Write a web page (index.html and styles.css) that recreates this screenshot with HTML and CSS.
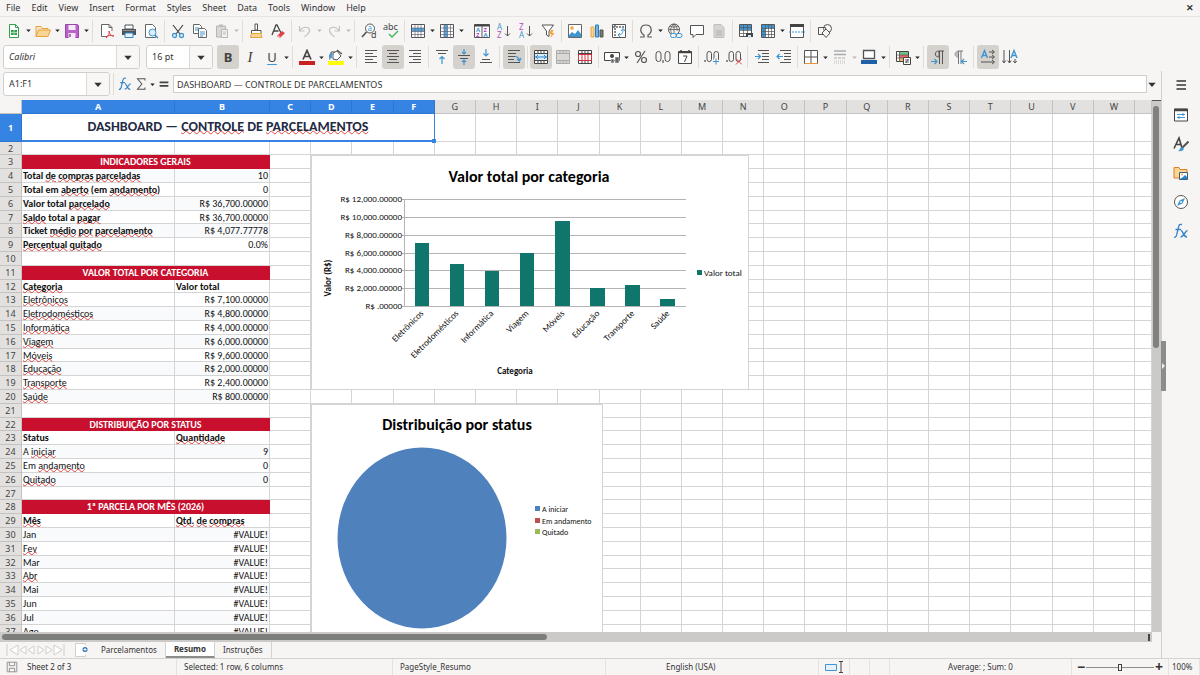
FILE: index.html
```html
<!DOCTYPE html>
<html lang="pt-BR">
<head>
<meta charset="utf-8">
<title>Controle de parcelamentos</title>
<link rel="stylesheet" href="styles.css">
</head>
<body>
<svg class="defs" aria-hidden="true">
<defs>
<symbol id="new" viewBox="0 0 16 16"><path d="M3.5 1.500h6l3 3v10h-9z" fill="#fff" stroke="#35a04b"/><path d="M9.500 1.500v3h3" fill="none" stroke="#35a04b"/><path d="M5 7h6v5H5z" fill="#35a04b"/><path d="M5 9.500h6M8 7v5" stroke="#a5dbb0"/></symbol>
<symbol id="open" viewBox="0 0 16 16"><path d="M1 13.500V3.500h5l1 2h6v2" fill="#fbe5c4" stroke="#e8a33d"/><path d="M1 13.500 3.500 7H15.500L13 13.500z" fill="#fbd596" stroke="#e8a33d"/></symbol>
<symbol id="save" viewBox="0 0 16 16"><path d="M1.500 1.500h12l1 1v12h-13z" fill="#b865c6" stroke="#9b45ad"/><path d="M4.500 2h7v5h-7zM4.500 10h7v5h-7z" fill="#f6eaf8"/><path d="M6 11v3" stroke="#9b45ad" stroke-width="1.500"/></symbol>
<symbol id="pdf" viewBox="0 0 16 16"><path d="M13 8V4.500l-3-3H2.500v12H8" fill="#fff" stroke="#666"/><path d="M10 1.500v3h3" fill="none" stroke="#666"/><path d="M7 15c3-2 3.500-4 3-7M10 8c1 4 2 5 5 5M7 14c2-2 5-2 8-1" fill="none" stroke="#d9414e"/></symbol>
<symbol id="print" viewBox="0 0 16 16"><path d="M4 2h8v4H4z" fill="#fff" stroke="#4d5359"/><path d="M1 6h14v6H1z" fill="#4d5359"/><path d="M4 10h8v4.500H4z" fill="#e8f3fb" stroke="#3784c5"/><path d="M2 7.500h12" stroke="#8b9095"/></symbol>
<symbol id="preview" viewBox="0 0 16 16"><path d="M2.500 1.500h7l3 3v10h-10z" fill="#fff" stroke="#666"/><circle cx="9.500" cy="9.500" r="3.500" fill="#dceffb" stroke="#3e95d0"/><path d="m12 12 3 3" stroke="#3e95d0" stroke-width="1.500"/></symbol>
<symbol id="cut" viewBox="0 0 16 16"><path d="m3 2 7 9M13 2 6 11" stroke="#444" stroke-width="1.200"/><circle cx="4.500" cy="12.500" r="2" fill="none" stroke="#3e95d0" stroke-width="1.300"/><circle cx="11.500" cy="12.500" r="2" fill="none" stroke="#3e95d0" stroke-width="1.300"/></symbol>
<symbol id="copy" viewBox="0 0 16 16"><path d="M1.500 1.500h6l2 2v7h-8z" fill="#fff" stroke="#666"/><path d="M3 5h4M3 7h4" stroke="#3e95d0"/><path d="M6.500 5.500h6l2 2v7h-8z" fill="#fff" stroke="#666"/><path d="M8 9h5M8 11h5M8 13h3" stroke="#3e95d0"/></symbol>
<symbol id="paste" viewBox="0 0 16 16"><path d="M2.500 3h9v11h-9z" fill="#d9d8d6" stroke="#b7b6b4"/><path d="M5 1.500h4V4H5z" fill="#bbb"/><path d="M7.500 6.500h6v8h-6z" fill="#f4f4f3" stroke="#b7b6b4"/><path d="M9 9h3M9 11h3" stroke="#b7b6b4"/></symbol>
<symbol id="brush" viewBox="0 0 16 16"><path d="M7 1h2.500v6H7z" fill="#fff" stroke="#555"/><path d="M3.500 7.500h9.500v3H3.500z" fill="#fff" stroke="#555"/><path d="M3.500 10.500 2.500 14.500h11.500l-1-4z" fill="#fbd596" stroke="#e8a33d"/></symbol>
<symbol id="clear" viewBox="0 0 16 16"><path d="m2 12 4-10h1l4 8M3.500 8h5" fill="none" stroke="#444" stroke-width="1.300"/><path d="m7 13 5-5 3 2-5 5z" fill="#e3404a"/><path d="m7 13 3 2 1-1-3-2z" fill="#f2a2a7"/></symbol>
<symbol id="undo" viewBox="0 0 16 16"><path d="M2.500 3v5h5M3 7.500C6 3 12 3.500 12.500 7c.4 3-3 5-5 7" fill="none" stroke="#c4c3c1" stroke-width="1.200"/></symbol>
<symbol id="redo" viewBox="0 0 16 16"><path d="M13.500 3v5h-5M13 7.500C10 3 4 3.500 3.500 7c-.4 3 3 5 5 7" fill="none" stroke="#c4c3c1" stroke-width="1.200"/></symbol>
<symbol id="find" viewBox="0 0 16 16"><circle cx="9" cy="5.500" r="4.500" fill="#fff" stroke="#555"/><path d="M5.500 9 1 14" stroke="#555" stroke-width="1.700"/><text x="6.500" y="8" class="g-blue g8">a</text><text x="10" y="15" class="g-dark g9">d</text></symbol>
<symbol id="spell" viewBox="0 0 16 16"><text x="0" y="7" class="g-dark g9">abc</text><path d="m6 11 3 3 6-6" fill="none" stroke="#3fb55c" stroke-width="1.400"/></symbol>
<symbol id="rows" viewBox="0 0 16 16"><path d="M1.500 1.500h13v13h-13z" fill="#fff" stroke="#555"/><path d="M2 5h12v3.500H2z" fill="#53a7e0"/><path d="M1.500 5h13M1.500 8.500h13M1.500 11.500h13M5 1.500v13M8 1.500v13M11 1.500v13" stroke="#667" stroke-width=".7"/></symbol>
<symbol id="cols" viewBox="0 0 16 16"><path d="M1.500 1.500h13v13h-13z" fill="#fff" stroke="#555"/><path d="M5 2h3.500v12H5z" fill="#53a7e0"/><path d="M1.500 5h13M1.500 8.500h13M1.500 11.500h13M5 1.500v13M8.500 1.500v13M11.500 1.500v13" stroke="#667" stroke-width=".7"/></symbol>
<symbol id="sort" viewBox="0 0 16 16"><path d="M.5 1.500h15v13H.5z" fill="#fff" stroke="#555"/><path d="M.5 2.500h15" stroke="#444" stroke-width="2"/><path d="M8 3v11" stroke="#555"/><text x="2" y="9" class="g-blue g6">A</text><text x="2" y="14" class="g-pur g6">Z</text><text x="9.500" y="9" class="g-pur g6">Z</text><text x="9.500" y="14" class="g-blue g6">A</text></symbol>
<symbol id="az" viewBox="0 0 16 16"><text x="1" y="7" class="g-blue g8">A</text><text x="1" y="15" class="g-pur g8">Z</text><path d="M11.500 3v10m-2.500-2.500 2.500 2.500L14 10.500" fill="none" stroke="#555"/></symbol>
<symbol id="za" viewBox="0 0 16 16"><text x="1" y="7" class="g-pur g8">Z</text><text x="1" y="15" class="g-blue g8">A</text><path d="M11.500 3v10m-2.500-2.500 2.500 2.500L14 10.500" fill="none" stroke="#555"/></symbol>
<symbol id="filter" viewBox="0 0 16 16"><path d="M2 2h11.500L9 8v5.500L6.500 12V8z" fill="#fff" stroke="#555"/><path d="m11 7-2 4h2.500l-1 4 4-5H12l1.500-3z" fill="#f3a23b"/></symbol>
<symbol id="image" viewBox="0 0 16 16"><path d="M1.500 1.500h13v13h-13z" fill="#fff" stroke="#666"/><circle cx="5" cy="5" r="1.700" fill="#f3a23b"/><path d="m2 14 0-2 3-3 3 2 3-4 3 4v3z" fill="#3e95d0"/></symbol>
<symbol id="chart" viewBox="0 0 16 16"><path d="M2 4h3v10H2z" fill="#fbd596" stroke="#e8a33d"/><path d="M6.500 2h3v12h-3z" fill="#70b3e4" stroke="#2b7fc0"/><path d="M11 7h3v7h-3z" fill="#777" stroke="#555"/></symbol>
<symbol id="pivot" viewBox="0 0 16 16"><path d="M1.500 1.500h13v13h-13z" fill="#fff" stroke="#555"/><path d="M2 4h12M4 2v12" stroke="#666" stroke-width="1.500" stroke-dasharray="2 1"/><path d="M7 12c4 0 5-2 5-6m-2 2 2-2.500L14 8M9 10l-2 2 2 2" fill="none" stroke="#3e95d0"/></symbol>
<symbol id="omega" viewBox="0 0 16 16"><path d="M2 14h4v-2C1 9 2 2 8 2s7 7 2 10v2h4" fill="none" stroke="#555" stroke-width="1.200"/></symbol>
<symbol id="link" viewBox="0 0 16 16"><circle cx="7" cy="6.500" r="5.500" fill="none" stroke="#555"/><path d="M1.500 6.500h11M7 1v11M3 3c2 1.500 6 1.500 8 0M7 1c-4 3-4 7-2 10M7 1c4 3 3 6 3 7" fill="none" stroke="#555" stroke-width=".8"/><rect x="3.500" y="10.500" width="6" height="4" rx="2" fill="#f6f5f4" stroke="#3e95d0"/><rect x="9" y="10.500" width="6" height="4" rx="2" fill="none" stroke="#3e95d0"/></symbol>
<symbol id="comment" viewBox="0 0 16 16"><path d="M1.500 2.500h13v9H7l-3 3v-3H1.500z" fill="#fff" stroke="#555"/></symbol>
<symbol id="header" viewBox="0 0 16 16"><path d="M3 1.500h7l3 3v10H3z" fill="#d5d4d2" stroke="#c0bfbd"/><path d="M5 8h6M5 10h6M5 12h6" stroke="#b2b1af"/></symbol>
<symbol id="area" viewBox="0 0 16 16"><path d="M1.500 1.500h12v12h-12z" fill="#fff" stroke="#555"/><path d="M2 2h11v5H2z" fill="#3e95d0"/><path d="M1.500 4.500h12M1.500 7.500h12M1.500 10.500h12M5.500 1.500v12M9.500 1.500v12" stroke="#555" stroke-width=".7"/><path d="M8 10h7v4H8z" fill="#444"/><path d="M10 12h3v3h-3z" fill="#cbe5f7"/></symbol>
<symbol id="freeze" viewBox="0 0 16 16"><path d="M1.500 1.500h13v13h-13z" fill="#fff" stroke="#555"/><path d="M2 2h12v3.500H2zM2 2h3.500v12H2z" fill="#3e95d0"/><path d="M1.500 5.500h13M1.500 8.500h13M1.500 11.500h13M5.500 1.500v13M8.500 1.500v13M11.500 1.500v13" stroke="#555" stroke-width=".7"/></symbol>
<symbol id="split" viewBox="0 0 16 16"><path d="M1.500 1.500h13v13h-13z" fill="#fff" stroke="#555"/><path d="M1 2.500h14" stroke="#444" stroke-width="3"/><path d="M0 9h16" stroke="#3e95d0" stroke-dasharray="2 1"/></symbol>
<symbol id="shapes" viewBox="0 0 16 16"><path d="M1.500 4.500h7v7h-7z" fill="none" stroke="#555"/><circle cx="10.500" cy="5.500" r="4" fill="none" stroke="#555"/><path d="m9 6 4 4-4 4.500-4-4.500z" fill="#f6f5f4" stroke="#555"/></symbol>
<symbol id="fcolor" viewBox="0 0 16 16"><path d="M4 10.500 8 1.500l4 9M5.500 7.500h5" fill="none" stroke="#444" stroke-width="1.700"/><path d="M0 12h16v4H0z" fill="#c9211e"/></symbol>
<symbol id="bcolor" viewBox="0 0 16 16"><path d="M3 9V3h4M5 4l4-2 4 5-4 4-4-1z" fill="#fff" stroke="#555"/><path d="M3 4C.5 5 1 8 1.500 11 4 9 3 6 5 5z" fill="#3e95d0"/><path d="m9 1 5 4" stroke="#555" stroke-width="1.300"/><path d="M0 12h16v4H0z" fill="#ff0"/></symbol>
<symbol id="left" viewBox="0 0 16 16"><path d="M2 1.500h12M2 4.500h8M2 7.500h12M2 10.500h8M2 13.500h12" stroke="#555"/></symbol>
<symbol id="center" viewBox="0 0 16 16"><path d="M2 1.500h12M4 4.500h8M2 7.500h12M4 10.500h8M2 13.500h12" stroke="#555"/></symbol>
<symbol id="right" viewBox="0 0 16 16"><path d="M2 1.500h12M6 4.500h8M2 7.500h12M6 10.500h8M2 13.500h12" stroke="#555"/></symbol>
<symbol id="top" viewBox="0 0 16 16"><path d="M2 1.500h12M4 4.500h8" stroke="#555"/><path d="M8 15V7.500M5.500 10 8 7.500l2.500 2.500" fill="none" stroke="#3e95d0" stroke-width="1.200"/></symbol>
<symbol id="middle" viewBox="0 0 16 16"><path d="M2 6.500h12M4 9.500h8" stroke="#555"/><path d="M8 0v5M6 3l2 2 2-2M8 16v-5M6 13l2-2 2 2" fill="none" stroke="#3e95d0" stroke-width="1.200"/></symbol>
<symbol id="bottom" viewBox="0 0 16 16"><path d="M4 10.500h8M2 13.500h12" stroke="#555"/><path d="M8 0v7M5.500 4.500 8 7l2.500-2.500" fill="none" stroke="#3e95d0" stroke-width="1.200"/></symbol>
<symbol id="wrap" viewBox="0 0 16 16"><path d="M2 1.500h12M2 4.500h8M2 7.500h7M2 10.500h6M2 13.500h12" stroke="#555"/><path d="M9 7.500c3 0 4 1 4.500 4M11 10l2.500 2L15 9" fill="none" stroke="#3e95d0" stroke-width="1.200"/></symbol>
<symbol id="merge" viewBox="0 0 16 16"><path d="M1.500 1.500h13v13h-13z" fill="#fff" stroke="#444"/><path d="M1.500 4.500h13M1.500 11.500h13M5 1.500v3M8 1.500v3M11 1.500v3M5 11.500v3M8 11.500v3M11 11.500v3" stroke="#444"/><path d="M2 5h12v6H2z" fill="#d6ecfa"/><path d="M2 8h12M5 6 3 8l2 2M11 6l2 2-2 2" fill="none" stroke="#2b84c6"/></symbol>
<symbol id="mergec" viewBox="0 0 16 16"><path d="M1.500 1.500h13v13h-13z" fill="#d9d8d6" stroke="#aaa"/><path d="M1.500 4.500h13M1.500 11.500h13M5 1.500v3M8 1.500v3M11 1.500v3M5 11.500v3M8 11.500v3M11 11.500v3" stroke="#aaa"/></symbol>
<symbol id="unmerge" viewBox="0 0 16 16"><path d="M1.500 1.500h13v13h-13z" fill="#fff" stroke="#444"/><path d="M1.500 4.500h13M5 1.500v3M8 1.500v3M11 1.500v3M5 11.500v3M8 11.500v3M11 11.500v3" stroke="#444"/><path d="M1.500 5.500h13v6h-13zM5 5.500v6M8 5.500v6M11 5.500v6" fill="none" stroke="#d9333f"/></symbol>
<symbol id="currency" viewBox="0 0 16 16"><path d="M.5 3.500h15v8H.5z" fill="#fff" stroke="#444"/><circle cx="8" cy="7" r="2" fill="#444"/><path d="M7 10h3v4H7zM11 8h4v6h-4z" fill="#666" stroke="#f6f5f4" stroke-width=".5"/></symbol>
<symbol id="percent" viewBox="0 0 16 16"><circle cx="5" cy="5" r="2.500" fill="none" stroke="#555" stroke-width="1.200"/><circle cx="11" cy="11" r="2.500" fill="none" stroke="#555" stroke-width="1.200"/><path d="M12 2 4 14" stroke="#555" stroke-width="1.200"/></symbol>
<symbol id="number" viewBox="0 0 16 16"><rect x="1" y="2.500" width="5" height="10" rx="2.500" fill="none" stroke="#555"/><rect x="10" y="2.500" width="5" height="10" rx="2.500" fill="none" stroke="#555"/><path d="M8 11v3" stroke="#555" stroke-width="1.200"/></symbol>
<symbol id="date" viewBox="0 0 16 16"><path d="M1.500 2.500h13v12h-13z" fill="#fff" stroke="#444"/><path d="M1 3.500h14M4 1v3M12 1v3" stroke="#444" stroke-width="1.500"/><path d="M6 7h4l-2.500 6" fill="none" stroke="#444"/></symbol>
<symbol id="adddec" viewBox="0 0 16 16"><path d="M1 11v2" stroke="#555" stroke-width="1.300"/><rect x="3" y="2.500" width="4.500" height="10" rx="2.200" fill="none" stroke="#555"/><rect x="10" y="2.500" width="4.500" height="10" rx="2.200" fill="none" stroke="#555"/><path d="M8 12.500h7M11.500 9v7" stroke="#f6f5f4" stroke-width="3"/><path d="M9 12.500h6M12 9.500v6" stroke="#3e95d0"/></symbol>
<symbol id="deldec" viewBox="0 0 16 16"><path d="M1 11v2" stroke="#555" stroke-width="1.300"/><rect x="3" y="2.500" width="4.500" height="10" rx="2.200" fill="none" stroke="#555"/><rect x="10" y="2.500" width="4.500" height="10" rx="2.200" fill="none" stroke="#555"/><path d="m10 9.500 6 6M16 9.500l-6 6" stroke="#e3404a"/></symbol>
<symbol id="indent" viewBox="0 0 16 16"><path d="M4 1.500h11M8 4.500h7M8 7.500h7M8 10.500h7M4 13.500h11" stroke="#555"/><path d="M1 7.500h5M4 5l2.500 2.500L4 10" fill="none" stroke="#3e95d0" stroke-width="1.200"/></symbol>
<symbol id="outdent" viewBox="0 0 16 16"><path d="M4 1.500h11M8 4.500h7M8 7.500h7M8 10.500h7M4 13.500h11" stroke="#555"/><path d="M1 7.500h6M3.500 5 1 7.500 3.500 10" fill="none" stroke="#3e95d0" stroke-width="1.200"/></symbol>
<symbol id="borders" viewBox="0 0 16 16"><path d="M1.500 1.500h13v13h-13zM8 1.500v13M1.500 8h13" fill="#fff" stroke="#555"/><path d="M1.500 14.500h13" stroke="#e8943d"/></symbol>
<symbol id="bstyle" viewBox="0 0 16 16"><path d="M2 2h12M2 5.500h12" stroke="#aaa" stroke-width="1.500"/><path d="M2 9h12" stroke="#aaa" stroke-dasharray="3 1"/><path d="M2 12h12M2 14h12" stroke="#bbb" stroke-dasharray="1 1"/></symbol>
<symbol id="bline" viewBox="0 0 16 16"><path d="M2.500 1.500h11v8h-11z" fill="#fff" stroke="#555" stroke-width="1.300"/><path d="M0 11h16v4H0z" fill="#1f5fa8"/></symbol>
<symbol id="cond" viewBox="0 0 16 16"><path d="M1.500 2.500h12v10h-12z" fill="#fff" stroke="#444"/><path d="M4 3h9v3H4z" fill="#6cc287"/><path d="M4 6h9v3H4z" fill="#e5666b"/><path d="M4 9h9v3H4z" fill="#f3b45f"/><path d="M1.500 6h12M1.500 9h12M4.500 2.500v10" stroke="#555" stroke-width=".7"/><path d="M8.500 8.500h7v7h-7z" fill="#fff" stroke="#444"/><path d="M10 11h4M10 13h4M13 10l-2 4" stroke="#444" stroke-width=".8"/></symbol>
<symbol id="ltr" viewBox="0 0 16 16"><path d="M14 2H9C4 2 4 8 9 8V2M9.500 2v13M12.500 2v13" fill="none" stroke="#555"/><path d="M1 12.500h6M4.500 10 7 12.500 4.500 15" fill="none" stroke="#3e95d0" stroke-width="1.200"/></symbol>
<symbol id="rtl" viewBox="0 0 16 16"><path d="M11 2H7C2 2 2 8 6 8V2M6.500 2v13M9 2v13" fill="none" stroke="#777"/><path d="M6 2C2 2 2 8 6 8z" fill="#bbb"/><path d="M15 12.500h-5M12 10l-2.500 2.500L12 15" fill="none" stroke="#3e95d0" stroke-width="1.200"/></symbol>
<symbol id="horiz" viewBox="0 0 16 16"><path d="m1.500 9 3-7.500L7.500 9M2.500 6.500h4" fill="none" stroke="#3e95d0" stroke-width="1.400"/><path d="M9 3h5M12 1l2.500 2L12 5M9 8h5M12 6l2.500 2-2.500 2M1 13h13M12 11l2.500 2-2.500 2" fill="none" stroke="#555"/></symbol>
<symbol id="vert" viewBox="0 0 16 16"><path d="m9 9 3-7.500L15 9M10 6.500h4" fill="none" stroke="#3e95d0" stroke-width="1.400"/><path d="M2 1v13M.3 11.500 2 14l1.800-2.500M7.500 1v13M5.700 11.500 7.500 14l1.800-2.500M13 10v4M11.300 12l1.700 2 1.800-2" fill="none" stroke="#555"/></symbol>
<symbol id="fx" viewBox="0 0 16 16"><path d="M1 14.500c2 0 2.500-1 3-4L5.500 4C6 1.500 7 1 9 1.500M2.500 6.500H8" fill="none" stroke="#3584c8" stroke-width="1.300"/><path d="M8 7.500c2 0 2.500 7 6 6.500M14.500 7.500c-2 0-4 6.500-7 6.500" fill="none" stroke="#3584c8" stroke-width="1.400"/></symbol>
<symbol id="sum" viewBox="0 0 16 16"><path d="M12.500 4V2H4l5 6-5 6h8.500v-2" fill="none" stroke="#555" stroke-width="1.200"/></symbol>
<symbol id="equals" viewBox="0 0 16 16"><path d="M3 6h10M3 10h10" stroke="#444" stroke-width="2"/></symbol>
<symbol id="burger" viewBox="0 0 16 16"><path d="M3.500 4h9.500M3.500 8h9.500M3.500 12h9.500" stroke="#333" stroke-width="1.400"/></symbol>
<symbol id="props" viewBox="0 0 16 16"><path d="M1.500 2h13v12h-13z" fill="#fff" stroke="#444"/><path d="M1 3h14" stroke="#444" stroke-width="2.500"/><path d="M4 7.500h8M4 10.500h8M10 6v3M6 9v3" stroke="#3e95d0"/></symbol>
<symbol id="styles" viewBox="0 0 16 16"><path d="M1 12.500 6 2l3 10M3 8.500h5" fill="none" stroke="#444" stroke-width="1.600"/><path d="M15.500 5.500 9 12" stroke="#555" stroke-width="2"/><path d="M5 15c2 0 1-3 4-4l2 2c-1 2-4 2.500-6 2z" fill="#3e95d0"/></symbol>
<symbol id="gallery" viewBox="0 0 16 16"><path d="M1 13V2.500h5l1 2h7V13z" fill="#fbd596" stroke="#e07f23"/><path d="M6.500 7.500h8v7h-8z" fill="#fff" stroke="#3a5d7a"/><circle cx="9" cy="9.500" r="1" fill="#f3a23b"/><path d="m7 14 3-2 2-2 2 2v2z" fill="#2b84c6"/></symbol>
<symbol id="nav" viewBox="0 0 16 16"><circle cx="8" cy="8" r="6.500" fill="#fff" stroke="#555"/><path d="m12 4-2.500 5.500L4 12l2.500-5.500z" fill="#3e95d0"/><circle cx="8" cy="8" r="1" fill="#fff"/></symbol>
<symbol id="disk" viewBox="0 0 16 16"><path d="M2.500 2.500h11v11h-11zM5 2.500v4h6v-4M5 13.500v-4h6v4" fill="none" stroke="#888"/></symbol>
<symbol id="addsheet" viewBox="0 0 16 16"><path d="M2.500 1.500h10v13h-10z" fill="#fff" stroke="#d0cfcd"/><path d="M12 3.500v9" stroke="#fff" stroke-width="3"/><circle cx="12" cy="7.500" r="2.500" fill="#2c6fb7"/><path d="M10.500 7.500h3M12 6v3" stroke="#fff"/></symbol>
<symbol id="arr" viewBox="0 0 6 4"><path d="M0 .5h6L3 4z" fill="currentColor"/></symbol>
</defs>
</svg>

<div class="app">
<nav class="menubar" aria-label="Main menu">
<button>File</button><button>Edit</button><button>View</button><button>Insert</button><button>Format</button><button>Styles</button><button>Sheet</button><button>Data</button><button>Tools</button><button>Window</button><button>Help</button>
<button class="close" aria-label="Close document">✕</button>
</nav>

<div class="toolbar standard" role="toolbar" aria-label="Standard">
<button class="tb" aria-label="New"><svg><use href="#new"/></svg></button><button class="dd" aria-label="New options"><svg><use href="#arr"/></svg></button>
<button class="tb" aria-label="Open"><svg><use href="#open"/></svg></button><button class="dd" aria-label="Open recent"><svg><use href="#arr"/></svg></button>
<button class="tb" aria-label="Save"><svg><use href="#save"/></svg></button><button class="dd" aria-label="Save options"><svg><use href="#arr"/></svg></button>
<i class="sep wide"></i>
<button class="tb" aria-label="Export as PDF"><svg><use href="#pdf"/></svg></button>
<button class="tb" aria-label="Print"><svg><use href="#print"/></svg></button>
<button class="tb" aria-label="Print preview"><svg><use href="#preview"/></svg></button>
<i class="sep"></i>
<button class="tb" aria-label="Cut"><svg><use href="#cut"/></svg></button>
<button class="tb" aria-label="Copy"><svg><use href="#copy"/></svg></button>
<button class="tb" aria-label="Paste" disabled><svg><use href="#paste"/></svg></button><button class="dd" aria-label="Paste options" disabled><svg><use href="#arr"/></svg></button>
<i class="sep"></i>
<button class="tb" aria-label="Clone formatting"><svg><use href="#brush"/></svg></button>
<button class="tb" aria-label="Clear formatting"><svg><use href="#clear"/></svg></button>
<i class="sep"></i>
<button class="tb" aria-label="Undo" disabled><svg><use href="#undo"/></svg></button><button class="dd" aria-label="Undo list" disabled><svg><use href="#arr"/></svg></button>
<button class="tb" aria-label="Redo" disabled><svg><use href="#redo"/></svg></button><button class="dd" aria-label="Redo list" disabled><svg><use href="#arr"/></svg></button>
<i class="sep wide"></i>
<button class="tb" aria-label="Find and replace"><svg><use href="#find"/></svg></button>
<button class="tb" aria-label="Spelling"><svg><use href="#spell"/></svg></button>
<i class="sep"></i>
<button class="tb" aria-label="Row"><svg><use href="#rows"/></svg></button><button class="dd" aria-label="Row options"><svg><use href="#arr"/></svg></button>
<button class="tb" aria-label="Column"><svg><use href="#cols"/></svg></button><button class="dd" aria-label="Column options"><svg><use href="#arr"/></svg></button>
<i class="sep wide blank"></i>
<button class="tb" aria-label="Sort"><svg><use href="#sort"/></svg></button>
<button class="tb" aria-label="Sort ascending"><svg><use href="#az"/></svg></button>
<button class="tb" aria-label="Sort descending"><svg><use href="#za"/></svg></button>
<button class="tb" aria-label="AutoFilter"><svg><use href="#filter"/></svg></button>
<i class="sep"></i>
<button class="tb" aria-label="Insert image"><svg><use href="#image"/></svg></button>
<button class="tb" aria-label="Insert chart"><svg><use href="#chart"/></svg></button>
<button class="tb" aria-label="Pivot table"><svg><use href="#pivot"/></svg></button>
<i class="sep"></i>
<button class="tb" aria-label="Special character"><svg><use href="#omega"/></svg></button><button class="dd" aria-label="Special characters"><svg><use href="#arr"/></svg></button>
<button class="tb" aria-label="Hyperlink"><svg><use href="#link"/></svg></button>
<button class="tb" aria-label="Comment"><svg><use href="#comment"/></svg></button>
<button class="tb" aria-label="Headers and footers" disabled><svg><use href="#header"/></svg></button>
<i class="sep"></i>
<button class="tb" aria-label="Print area"><svg><use href="#area"/></svg></button>
<button class="tb" aria-label="Freeze"><svg><use href="#freeze"/></svg></button><button class="dd" aria-label="Freeze options"><svg><use href="#arr"/></svg></button>
<button class="tb" aria-label="Split window"><svg><use href="#split"/></svg></button>
<i class="sep wide"></i>
<button class="tb" aria-label="Draw functions"><svg><use href="#shapes"/></svg></button>
</div>

<div class="toolbar formatting" role="toolbar" aria-label="Formatting">
<div class="combo font"><input aria-label="Font name" value="Calibri"><button aria-label="Font list"><svg><use href="#arr"/></svg></button></div>
<div class="combo size"><input aria-label="Font size" value="16 pt"><button aria-label="Size list"><svg><use href="#arr"/></svg></button></div>
<button class="tb on letter"><b>B</b></button>
<button class="tb letter"><em>I</em></button>
<button class="tb letter"><u>U</u></button><button class="dd" aria-label="Underline options"><svg><use href="#arr"/></svg></button>
<i class="sep wide"></i>
<button class="tb" aria-label="Font color"><svg><use href="#fcolor"/></svg></button><button class="dd" aria-label="Font colors"><svg><use href="#arr"/></svg></button>
<button class="tb" aria-label="Background color"><svg><use href="#bcolor"/></svg></button><button class="dd" aria-label="Background colors"><svg><use href="#arr"/></svg></button>
<i class="sep wide"></i>
<button class="tb" aria-label="Align left"><svg><use href="#left"/></svg></button>
<button class="tb on" aria-label="Align center"><svg><use href="#center"/></svg></button>
<button class="tb" aria-label="Align right"><svg><use href="#right"/></svg></button>
<i class="sep"></i>
<button class="tb" aria-label="Align top"><svg><use href="#top"/></svg></button>
<button class="tb on" aria-label="Center vertically"><svg><use href="#middle"/></svg></button>
<button class="tb" aria-label="Align bottom"><svg><use href="#bottom"/></svg></button>
<i class="sep wide"></i>
<button class="tb on" aria-label="Wrap text"><svg><use href="#wrap"/></svg></button>
<i class="sep"></i>
<button class="tb on" aria-label="Merge and center"><svg><use href="#merge"/></svg></button>
<button class="tb" aria-label="Merge cells" disabled><svg><use href="#mergec"/></svg></button>
<button class="tb" aria-label="Unmerge cells"><svg><use href="#unmerge"/></svg></button>
<i class="sep"></i>
<button class="tb" aria-label="Currency"><svg><use href="#currency"/></svg></button><button class="dd" aria-label="Currency options"><svg><use href="#arr"/></svg></button>
<button class="tb" aria-label="Percent"><svg><use href="#percent"/></svg></button>
<button class="tb" aria-label="Number"><svg><use href="#number"/></svg></button>
<button class="tb" aria-label="Date"><svg><use href="#date"/></svg></button>
<i class="sep"></i>
<button class="tb" aria-label="Add decimal place"><svg><use href="#adddec"/></svg></button>
<button class="tb" aria-label="Delete decimal place"><svg><use href="#deldec"/></svg></button>
<i class="sep wide"></i>
<button class="tb" aria-label="Increase indent"><svg><use href="#indent"/></svg></button>
<button class="tb" aria-label="Decrease indent"><svg><use href="#outdent"/></svg></button>
<i class="sep"></i>
<button class="tb" aria-label="Borders"><svg><use href="#borders"/></svg></button><button class="dd" aria-label="Border options"><svg><use href="#arr"/></svg></button>
<button class="tb" aria-label="Border style" disabled><svg><use href="#bstyle"/></svg></button><button class="dd" aria-label="Border styles" disabled><svg><use href="#arr"/></svg></button>
<button class="tb" aria-label="Border color"><svg><use href="#bline"/></svg></button><button class="dd" aria-label="Border colors"><svg><use href="#arr"/></svg></button>
<i class="sep"></i>
<button class="tb" aria-label="Conditional formatting"><svg><use href="#cond"/></svg></button><button class="dd" aria-label="Conditional options"><svg><use href="#arr"/></svg></button>
<i class="sep wide"></i>
<button class="tb on" aria-label="Left to right"><svg><use href="#ltr"/></svg></button>
<button class="tb" aria-label="Right to left"><svg><use href="#rtl"/></svg></button>
<i class="sep wide"></i>
<button class="tb on" aria-label="Horizontal text"><svg><use href="#horiz"/></svg></button>
<button class="tb" aria-label="Vertical text"><svg><use href="#vert"/></svg></button>
</div>

<div class="main">
<div class="work">
<div class="formulabar">
<div class="combo name"><input aria-label="Name box" value="A1:F1"><button aria-label="Name list"><svg><use href="#arr"/></svg></button></div>
<i class="sep"></i>
<button class="fb" aria-label="Function wizard"><svg><use href="#fx"/></svg></button>
<button class="fb" aria-label="Sum"><svg><use href="#sum"/></svg></button>
<button class="dd" aria-label="Select function"><svg><use href="#arr"/></svg></button>
<button class="fb" aria-label="Formula"><svg><use href="#equals"/></svg></button>
<input class="formula" aria-label="Input line" value="DASHBOARD — CONTROLE DE PARCELAMENTOS">
<button class="expand" aria-label="Expand formula bar"><svg><use href="#arr"/></svg></button>
</div>
<div class="sheetrow">
<div class="sheet">
<table class="grid" id="grid"></table>
<svg class="plot bars" viewBox="311 155 438 235" role="img" aria-label="Valor total por categoria">
<rect x="311.500" y="155.500" width="437" height="234" fill="#fff" stroke="#d4d4d4"/>
<text x="529" y="182" class="c-title" text-anchor="middle">Valor total por categoria</text>
<path d="M402 199.500h284M402 217.500h284M402 235.500h284M402 253.500h284M402 270.500h284M402 288.500h284M402 306.500h284M404.500 199v108" stroke="#b3b3b3" fill="none"/>
<g class="c-label" text-anchor="end"><text x="402" y="202">R$ 12,000.00000</text><text x="402" y="220">R$ 10,000.00000</text><text x="402" y="238">R$ 8,000.00000</text><text x="402" y="256">R$ 6,000.00000</text><text x="402" y="273">R$ 4,000.00000</text><text x="402" y="291">R$ 2,000.00000</text><text x="402" y="309">R$ .00000</text></g>
<g fill="#10766c"><rect x="415" y="243" width="14" height="63"/><rect x="450" y="264" width="14" height="42"/><rect x="485" y="271" width="14" height="35"/><rect x="520" y="253" width="14" height="53"/><rect x="555" y="221" width="15" height="85"/><rect x="590" y="288" width="15" height="18"/><rect x="625" y="285" width="15" height="21"/><rect x="660" y="299" width="15" height="7"/></g>
<g class="c-label" text-anchor="end"><text transform="translate(424 314) rotate(-45)">Eletrônicos</text><text transform="translate(459 314) rotate(-45)">Eletrodomésticos</text><text transform="translate(494 314) rotate(-45)">Informática</text><text transform="translate(529 314) rotate(-45)">Viagem</text><text transform="translate(565 314) rotate(-45)">Móveis</text><text transform="translate(600 314) rotate(-45)">Educação</text><text transform="translate(635 314) rotate(-45)">Transporte</text><text transform="translate(670 314) rotate(-45)">Saúde</text></g>
<text class="c-axis" text-anchor="middle" transform="translate(331 278) rotate(-90)">Valor (R$)</text>
<text class="c-axis" text-anchor="middle" x="515" y="374">Categoria</text>
<rect x="697" y="270" width="5" height="5" fill="#10766c"/><text class="c-label" x="704" y="276">Valor total</text>
</svg>
<svg class="plot pie" viewBox="311 404 292 240" role="img" aria-label="Distribuição por status">
<rect x="311.500" y="404.500" width="291" height="239" fill="#fff" stroke="#d4d4d4"/>
<text x="457" y="430" class="c-title" text-anchor="middle">Distribuição por status</text>
<ellipse cx="422" cy="538" rx="84.500" ry="90.500" fill="#4f81bd"/>
<g class="c-label"><rect x="535" y="506" width="5" height="5" fill="#4f81bd"/><text x="542" y="512">A iniciar</text><rect x="535" y="518" width="5" height="5" fill="#c0504d"/><text x="542" y="524">Em andamento</text><rect x="535" y="529" width="5" height="5" fill="#9bbb59"/><text x="542" y="535">Quitado</text></g>
</svg>
</div>
<div class="vscroll"><div class="vthumb"></div></div>
</div>
<div class="hscroll"><div class="hthumb"></div><div class="hsplit"></div></div>
<div class="tabs" role="tablist">
<svg class="tabnav" viewBox="0 0 60 14" aria-hidden="true"><path d="M1 1v12M12 2 4 7l8 5zM20 3l-6 4 6 4zM28 3l-6 4 6 4zM32 3l6 4-6 4zM40 3l6 4-6 4zM48 2l8 5-8 5zM58 1v12" fill="#fff" stroke="#cfcecc"/></svg>
<button class="add" aria-label="Add sheet"><svg><use href="#addsheet"/></svg></button>
<button role="tab" class="tab">Parcelamentos</button><button role="tab" class="tab current" aria-selected="true">Resumo</button><button role="tab" class="tab">Instruções</button>
</div>
</div>
<aside class="sidebar" aria-label="Sidebar">
<div class="grip"><svg viewBox="0 0 4 6"><path d="M1 0v6l3-3z" fill="#eee"/></svg></div>
<button aria-label="Sidebar settings"><svg><use href="#burger"/></svg></button>
<button aria-label="Properties"><svg><use href="#props"/></svg></button>
<button aria-label="Styles"><svg><use href="#styles"/></svg></button>
<button aria-label="Gallery"><svg><use href="#gallery"/></svg></button>
<button aria-label="Navigator"><svg><use href="#nav"/></svg></button>
<button aria-label="Functions"><svg><use href="#fx"/></svg></button>
</aside>
</div>

<footer class="status">
<span class="s-save"><svg><use href="#disk"/></svg></span>
<span class="s-sheet">Sheet 2 of 3</span>
<span class="s-sel">Selected: 1 row, 6 columns</span>
<span class="s-style">PageStyle_Resumo</span>
<span class="s-lang">English (USA)</span>
<span class="s-mode"><svg viewBox="0 0 20 12"><path d="M.5 3.500h11v6H.5z" fill="#e5f2fb" stroke="#3e95d0"/><path d="M14 .5h4M14 11.500h4M16 1v10" stroke="#444"/></svg></span>
<span class="s-box"></span><span class="s-box"></span>
<span class="s-sum">Average: ; Sum: 0</span>
<span class="s-zoom"><button aria-label="Zoom out">−</button><input type="range" min="0" max="100" value="50" aria-label="Zoom"><button aria-label="Zoom in">+</button></span>
<span class="s-pct">100%</span>
</footer>
</div>
<script src="script.js"></script>
</body>
</html>
```

FILE: styles.css
```css
* { box-sizing: border-box; }
html, body { height: 100%; }
body { margin: 0; font: 9px/12px "Noto Sans", sans-serif; color: #333; background: #f6f5f4; overflow: hidden; }
button, input { font: inherit; color: inherit; border: 0; background: none; padding: 0; margin: 0; min-width: 0; }
.defs { position: absolute; width: 0; height: 0; }
.app { height: 100vh; display: flex; flex-direction: column; }

.g-blue { fill: #3e95d0; } .g-pur { fill: #b04fc0; } .g-dark { fill: #444; }
.g6 { font: bold 6px "Noto Sans", sans-serif; } .g8 { font: 8px "Noto Sans", sans-serif; } .g9 { font: 9px "Noto Sans", sans-serif; }

.menubar { display: flex; gap: 11px; height: 17px; padding: 0 6px; align-items: center; border-bottom: 1px solid #e6e5e3; flex: none; }
.menubar .close { margin-left: auto; font-weight: bold; }

.toolbar { display: flex; align-items: center; padding-left: 3px; height: 27px; flex: none; }
.formatting { padding-bottom: 1px; }
.tb { width: 22px; height: 24px; flex: none; display: flex; align-items: center; justify-content: center; border-radius: 3px; }
.tb svg, .sidebar button svg, .add svg { width: 16px; height: 16px; display: block; }
.tb.on { background: #d5d1cd; }
.letter { font-size: 13px; color: #444; }
.letter em { font-family: "Liberation Serif", serif; font-size: 15px; }
.letter u { text-decoration-color: #3e95d0; text-underline-offset: 2px; text-decoration-thickness: 1px; }
.dd { width: 7px; height: 22px; flex: none; display: flex; align-items: center; justify-content: center; color: #222; }
.dd svg { width: 5px; height: 3px; }
.dd:disabled { color: #b9b8b6; }
.sep { width: 5px; height: 22px; flex: none; background: linear-gradient(#deddda, #deddda) 2px 0 / 1px 100% no-repeat; }
.sep.wide { width: 6px; }
.sep.blank { background: none; }

.combo { display: flex; height: 24px; border: 1px solid #d2cfcc; border-radius: 3px; background: #fff; overflow: hidden; flex: none; }
.combo input { flex: 1; padding-left: 5px; }
.combo button { width: 23px; background: #f8f7f6; border-left: 1px solid #dcdad7; display: flex; align-items: center; justify-content: center; }
.combo svg { width: 8px; height: 5px; }
.font { width: 137px; margin-right: 6px; }
.font input { font-style: italic; }
.size { width: 67px; margin-right: 4px; }
.name { width: 107px; }

.main { flex: 1; display: flex; min-height: 0; }
.work { flex: 1; display: flex; flex-direction: column; min-width: 0; }
.formulabar { display: flex; align-items: center; height: 29px; padding: 0 4px 3px 3px; flex: none; }
.formulabar .sep { margin: 0 1px; }
.fb { width: 16px; height: 20px; flex: none; display: flex; align-items: center; justify-content: center; }
.fb svg, .s-save svg { width: 14px; height: 14px; display: block; }
.formula { flex: 1; height: 18px; margin-left: 1px; border: 1px solid #cfccc9; background: #fff; padding-left: 3px; }
.expand { width: 10px; display: flex; justify-content: center; }
.expand svg { width: 8px; height: 5px; }

.sheetrow { flex: 1; display: flex; min-height: 0; }
.sheet { flex: 1; position: relative; overflow: hidden; background: #fff; min-width: 0; }
.grid { width: 100%; table-layout: fixed; border-collapse: separate; border-spacing: 0; font: 10px/12px Carlito, Lato, sans-serif; color: #111; }
.grid .c-num { width: 22px; } .grid .c-a { width: 153px; } .grid .c-b { width: 95px; } .grid .c-last { width: 17px; }
.grid th, .grid td { padding: 0; height: 14px; border-right: 1px solid #d5d5d5; border-bottom: 1px solid #d5d5d5; white-space: nowrap; }
.grid th { background: #e2e1df; border-color: #c4c3c1; color: #444; font: 9px/12px "Noto Sans", sans-serif; text-align: center; }
.grid thead th.sel, .grid tbody th.sel { background: #3584e4; border-color: #2a76d2; color: #fff; font-weight: bold; }
.grid .corner { background: #f6f5f4; }
.grid tbody tr:nth-child(5n+2) th, .grid tbody tr:nth-child(5n+2) td { height: 13px; line-height: 11px; }
.grid tbody tr:first-child th, .grid tbody tr:first-child td { height: 28px; }
.grid td.l { padding-left: 1px; }
.grid td.r { text-align: right; padding-right: 1px; }
.grid td.tint { background: #f8fafc; }
.grid td.b { font-weight: bold; }
.grid td.head { background: #c8102e; border-color: #c8102e; color: #fff; font-weight: bold; text-align: center; }
.grid td.title { position: relative; font-size: 14px; line-height: 20px; font-weight: bold; text-align: center; color: #1f2a44; border-right: 1px solid #3584e4; border-bottom: 2px solid #3584e4; }
.title::after { content: ""; position: absolute; right: -2px; bottom: -3px; width: 4px; height: 4px; background: #3584e4; }
.sp { text-decoration: underline wavy #e0403c; text-decoration-thickness: 1px; text-underline-offset: -1px; text-decoration-skip-ink: none; }

.plot { position: absolute; left: 311px; }
.bars { top: 55px; width: 438px; height: 235px; }
.pie { top: 304px; width: 292px; height: 240px; }
.plot text { font-family: Carlito, Lato, sans-serif; fill: #111; }
.plot .c-title { font-size: 16px; font-weight: bold; fill: #000; }
.plot .c-label { font-size: 9px; }
.pie .c-label { font-size: 8px; }
.plot .c-axis { font-size: 9px; font-weight: bold; }

.vscroll { width: 9px; background: #cbcac9; padding: 5px 2px 0 1px; border-top: 1px solid #555; flex: none; }
.vthumb { height: 46%; border-radius: 3px; background: #7f807f; }
.hscroll { display: flex; align-items: center; height: 10px; margin-right: 9px; padding: 0 2px; background: #cbcac9; flex: none; }
.hthumb { width: 47.500%; height: 6px; border-radius: 3px; background: #7c7e7c; }
.hsplit { margin-left: auto; width: 2px; height: 7px; background: #444; }
.tabs { display: flex; height: 16px; padding-left: 6px; flex: none; align-items: stretch; font-size: 8px; }
.tabnav { width: 60px; height: 14px; align-self: center; margin-right: 7px; }
.add { width: 16px; margin-right: 4px; }
.tab { padding: 0 8px; border-right: 1px solid #d5d3d0; }
.current { background: #fff; font-weight: bold; border-bottom: 2px solid #8b8d8b; }

.sidebar { position: relative; width: 39px; border-left: 1px solid #d2d0cd; display: flex; flex-direction: column; align-items: center; gap: 9px; padding-top: 4px; flex: none; }
.sidebar button { height: 20px; }
.sidebar button:nth-of-type(1) { margin-bottom: 1px; }
.grip { position: absolute; left: -1px; top: 46%; width: 5px; height: 50px; background: #8b8d8b; display: flex; align-items: center; }
.grip svg { width: 4px; height: 6px; }

.status { display: flex; height: 17px; align-items: stretch; border-top: 1px solid #d5d3d0; flex: none; font-size: 8px; }
.status > span { display: flex; align-items: center; border-right: 1px solid #e4e3e1; flex: none; }
.s-save { width: 24px; justify-content: center; }
.status .s-save { border: 0; }
.s-sheet { width: 153px; padding-left: 3px; }
.s-sel { width: 216px; padding-left: 7px; }
.s-style { width: 213px; padding-left: 7px; }
.status .s-lang { flex: 1; padding-left: 60px; }
.s-mode { width: 31px; padding-left: 6px; }
.s-mode svg { width: 20px; height: 12px; }
.s-box { width: 20px; }
.s-sum { width: 182px; justify-content: center; }
.s-zoom { width: 97px; padding: 0 4px; }
.s-zoom button { width: 10px; font: bold 14px/14px "Noto Sans", sans-serif; }
.s-zoom input { flex: 1; height: 12px; appearance: none; background: linear-gradient(#8d8d8d, #8d8d8d) center / 100% 1px no-repeat; }
.s-zoom input::-webkit-slider-thumb { appearance: none; width: 4px; height: 7px; border: 1px solid #444; background: #f6f5f4; }
.s-pct { width: 31px; padding-left: 3px; }
```

FILE: script.js
```js
const LETTERS = "ABCDEFGHIJKLMNOPQRSTUVW".split("");
const ROW_COUNT = 37;

// Words between asterisks are flagged by the spell checker.
const rows = {
  3: { head: "INDICADORES GERAIS" },
  4: { a: "Total *de* *compras* *parceladas*", b: "10", bold: 1 },
  5: { a: "Total em *aberto* (em *andamento*)", b: "0", bold: 1 },
  6: { a: "Valor total *parcelado*", b: "R$ 36,700.00000", bold: 1 },
  7: { a: "*Saldo* total a *pagar*", b: "R$ 36,700.00000", bold: 1 },
  8: { a: "Ticket *médio* *por* *parcelamento*", b: "R$ 4,077.77778", bold: 1 },
  9: { a: "*Percentual* *quitado*", b: "0.0%", bold: 1 },
  11: { head: "VALOR TOTAL POR CATEGORIA" },
  12: { a: "*Categoria*", sub: "Valor total" },
  13: { a: "*Eletrônicos*", b: "R$ 7,100.00000" },
  14: { a: "*Eletrodomésticos*", b: "R$ 4,800.00000" },
  15: { a: "*Informática*", b: "R$ 4,000.00000" },
  16: { a: "*Viagem*", b: "R$ 6,000.00000" },
  17: { a: "*Móveis*", b: "R$ 9,600.00000" },
  18: { a: "*Educação*", b: "R$ 2,000.00000" },
  19: { a: "*Transporte*", b: "R$ 2,400.00000" },
  20: { a: "*Saúde*", b: "R$ 800.00000" },
  22: { head: "DISTRIBUIÇÃO POR STATUS" },
  23: { a: "Status", sub: "*Quantidade*" },
  24: { a: "A *iniciar*", b: "9" },
  25: { a: "Em *andamento*", b: "0" },
  26: { a: "*Quitado*", b: "0" },
  28: { head: "1ª PARCELA POR MÊS (2026)" },
  29: { a: "*Mês*", sub: "*Qtd.* *de* *compras*" }
};
["Jan", "*Fev*", "Mar", "*Abr*", "Mai", "Jun", "Jul", "*Ago*"].forEach((month, i) => {
  rows[30 + i] = { a: month, b: "#VALUE!" };
});

const mark = text => text.replace(/\*([^*]+)\*/g, '<span class="sp">$1</span>');
const empty = n => "<td></td>".repeat(n);

function rowCells(n) {
  const row = rows[n];
  if (n === 1) return `<td class="title" colspan="6">${mark("DASHBOARD — *CONTROLE* DE *PARCELAMENTOS*")}</td>` + empty(18);
  if (!row) return empty(24);
  if (row.head) return `<td class="head" colspan="2">${row.head}</td>` + empty(22);
  if (row.sub) return `<td class="l b">${mark(row.a)}</td><td class="l b">${mark(row.sub)}</td>` + empty(22);
  const tint = n % 2 === 0 ? " tint" : "";
  return `<td class="l${row.bold ? " b" : ""}${tint}">${mark(row.a)}</td><td class="r${tint}">${row.b}</td>` + empty(22);
}

let html = '<colgroup><col class="c-num"><col class="c-a"><col class="c-b">' + "<col>".repeat(21) + '<col class="c-last"></colgroup>';
html += '<thead><tr><th class="corner"></th>' + LETTERS.map((l, i) => `<th scope="col"${i < 6 ? ' class="sel"' : ""}>${l}</th>`).join("") + "<th></th></tr></thead><tbody>";
for (let n = 1; n <= ROW_COUNT; n++) {
  html += `<tr><th scope="row"${n === 1 ? ' class="sel"' : ""}>${n}</th>${rowCells(n)}</tr>`;
}
document.getElementById("grid").innerHTML = html + "</tbody>";
```
